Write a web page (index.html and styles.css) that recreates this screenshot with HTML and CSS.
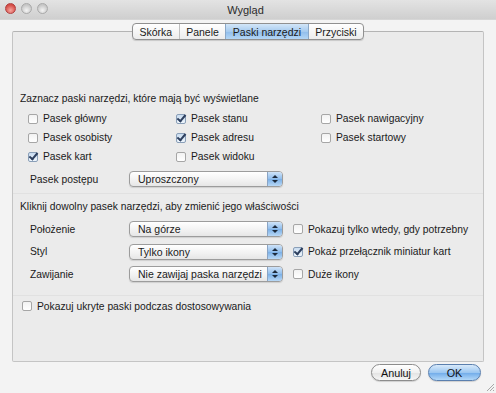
FILE: index.html
```html
<!DOCTYPE html>
<html lang="pl">
<head>
  <meta charset="UTF-8">
  <title>Wygląd</title>
  <link rel="stylesheet" href="styles.css">
</head>
<body>
  <div class="window">
    <header class="titlebar">
      <div class="lights">
        <span class="light red"></span>
        <span class="light"></span>
        <span class="light"></span>
      </div>
      <div class="title">Wygląd</div>
    </header>

    <div class="content">
      <div class="tabs">
        <div class="tab">Skórka</div>
        <div class="tab">Panele</div>
        <div class="tab active">Paski narzędzi</div>
        <div class="tab">Przyciski</div>
      </div>

      <div class="panel">
        <section class="group first">
          <div class="heading">Zaznacz paski narzędzi, które mają być wyświetlane</div>
          <div class="checks">
            <label class="check"><span class="box"></span>Pasek główny</label>
            <label class="check"><span class="box on"></span>Pasek stanu</label>
            <label class="check"><span class="box"></span>Pasek nawigacyjny</label>
            <label class="check"><span class="box"></span>Pasek osobisty</label>
            <label class="check"><span class="box on"></span>Pasek adresu</label>
            <label class="check"><span class="box"></span>Pasek startowy</label>
            <label class="check"><span class="box on"></span>Pasek kart</label>
            <label class="check"><span class="box"></span>Pasek widoku</label>
          </div>
          <div class="row">
            <span class="label">Pasek postępu</span>
            <div class="select"><span class="value">Uproszczony</span><span class="stepper"></span></div>
          </div>
        </section>

        <section class="group second">
          <div class="heading">Kliknij dowolny pasek narzędzi, aby zmienić jego właściwości</div>
          <div class="row">
            <span class="label">Położenie</span>
            <div class="select"><span class="value">Na górze</span><span class="stepper"></span></div>
            <label class="check"><span class="box"></span>Pokazuj tylko wtedy, gdy potrzebny</label>
          </div>
          <div class="row">
            <span class="label">Styl</span>
            <div class="select"><span class="value">Tylko ikony</span><span class="stepper"></span></div>
            <label class="check"><span class="box on"></span>Pokaż przełącznik miniatur kart</label>
          </div>
          <div class="row">
            <span class="label">Zawijanie</span>
            <div class="select"><span class="value">Nie zawijaj paska narzędzi</span><span class="stepper"></span></div>
            <label class="check"><span class="box"></span>Duże ikony</label>
          </div>
        </section>

        <section class="group third">
          <label class="check"><span class="box"></span>Pokazuj ukryte paski podczas dostosowywania</label>
        </section>
      </div>

      <div class="buttons">
        <button class="btn">Anuluj</button>
        <button class="btn default">OK</button>
      </div>
    </div>

    <svg class="grip" width="10" height="10" viewBox="0 0 10 10">
      <path d="M9 2 L2 9 M9 5 L5 9 M9 8 L8 9" stroke="#a8a8a8" stroke-width="1"/>
    </svg>
  </div>
</body>
</html>
```

FILE: styles.css
```css
body {
  margin: 0;
  font-family: 'Liberation Sans', Arial, sans-serif;
  font-size: 10.3px;
  color: #1a1a1a;
  background-color: #f3f3f3;
}

.window {
  width: 496px;
  height: 393px;
  display: flex;
  flex-direction: column;
  background: #f3f3f3;
  position: relative;
  overflow: hidden;
}

.titlebar {
  height: 19px;
  display: flex;
  align-items: center;
  background: linear-gradient(#e3e3e3, #cfcfcf);
  border-bottom: 1px solid #d6d6d6;
  position: relative;
}

.lights {
  display: flex;
  gap: 5px;
  padding-left: 5px;
  margin-top: -2px;
}

.light {
  width: 11px;
  height: 11px;
  border-radius: 50%;
  box-sizing: border-box;
  border: 1px solid #a9a9a9;
  background: radial-gradient(circle at 50% 70%, #f4f4f4, #c6c6c6 70%);
}

.light.red {
  border-color: #b04040;
  background: radial-gradient(circle at 50% 70%, #f7a6a0, #d44c45 70%);
}

.title {
  flex: 1;
  text-align: center;
  font-size: 11px;
  color: #2a2a2a;
  margin-left: -53px;
  margin-top: 1px;
}

.content {
  flex: 1;
  display: flex;
  flex-direction: column;
  padding: 3px 12px 0 12px;
}

/* segmented tabs */
.tabs {
  align-self: center;
  display: flex;
  height: 17px;
  margin-bottom: -9px;
  border: 1px solid #909090;
  border-radius: 4px;
  background: linear-gradient(#ffffff, #ececec);
  box-shadow: 0 1px 1px rgba(0, 0, 0, 0.15);
  overflow: hidden;
  position: relative;
  z-index: 1;
  box-sizing: border-box;
}

.tab {
  display: flex;
  align-items: center;
  padding: 0 6.5px;
  font-size: 10.5px;
  border-left: 1px solid #c0c0c0;
}

.tab:first-child {
  border-left: none;
}

.tab.active {
  background: linear-gradient(#d3e6f8, #a6cbef 50%, #8fbdec 51%, #b4d6f5);
  border-left-color: #8aa8c8;
}

.tab.active + .tab {
  border-left-color: #8aa8c8;
}

.panel {
  height: 331px;
  box-sizing: border-box;
  border: 1px solid #c4c4c4;
  border-top-color: #b4b4b4;
  background: #ebebeb;
  border-radius: 2px;
  padding: 57px 0 0 0;
}

.group {
  padding: 0 0 0 7px;
}

.heading {
  height: 20px;
  line-height: 20px;
}

.checks {
  display: grid;
  grid-template-columns: 148px 145px auto;
  grid-auto-rows: 19px;
  padding-left: 8px;
}

.check {
  display: flex;
  align-items: center;
  white-space: nowrap;
}

.box {
  width: 10px;
  height: 10px;
  box-sizing: border-box;
  border: 1px solid #a6a6a6;
  border-radius: 2px;
  background: linear-gradient(#f2f2f2, #ffffff);
  margin-right: 5px;
  flex: none;
  position: relative;
}

.box.on {
  border-color: #8a9fb8;
  background: linear-gradient(#c9dcf0, #eef5fc);
}

.box.on::after {
  content: "";
  position: absolute;
  left: 2px;
  top: -2px;
  width: 3px;
  height: 7px;
  border: solid #2d3f5e;
  border-width: 0 2px 2px 0;
  transform: rotate(40deg);
}

.row {
  display: flex;
  align-items: center;
  height: 22px;
}

.first .row {
  margin-top: 2px;
}

.label {
  width: 99px;
  padding-left: 10px;
  flex: none;
}

.select {
  width: 154px;
  height: 16px;
  box-sizing: border-box;
  border: 1px solid #9c9c9c;
  border-radius: 4px;
  background: linear-gradient(#ffffff, #f1f1f1 60%, #e6e6e6);
  box-shadow: 0 1px 1px rgba(0, 0, 0, 0.12);
  display: flex;
  align-items: center;
  overflow: hidden;
  flex: none;
}

.value {
  flex: 1;
  padding-left: 8px;
  font-size: 10.5px;
  white-space: nowrap;
}

.stepper {
  width: 14px;
  height: 100%;
  border-left: 1px solid #8aa4c4;
  background: linear-gradient(#cfe3f8, #8fbdec 50%, #7aafe6 51%, #b8d8f6);
  position: relative;
}

.stepper::before,
.stepper::after {
  content: "";
  position: absolute;
  left: 4px;
  border-left: 3px solid transparent;
  border-right: 3px solid transparent;
}

.stepper::before {
  top: 3px;
  border-bottom: 3px solid #1c2a3c;
}

.stepper::after {
  bottom: 3px;
  border-top: 3px solid #1c2a3c;
}

.row .check {
  margin-left: 10px;
}

.group.first {
  padding-bottom: 3px;
  border-bottom: 1px solid #e1e1e1;
}

.group.second {
  padding-top: 3px;
  padding-bottom: 9px;
  border-bottom: 1px solid #e1e1e1;
}

.group.second .heading {
  margin-bottom: 1px;
}

.group.second .row {
  height: 22.5px;
}

.group.third {
  padding: 5px 0 0 9px;
  height: 19px;
}

.buttons {
  display: flex;
  justify-content: flex-end;
  gap: 7px;
  padding: 2px 3px 0 0;
}

.btn {
  font-family: 'Liberation Sans', Arial, sans-serif;
  font-size: 10.8px;
  color: #111;
  height: 17px;
  border-radius: 9px;
  border: 1px solid #8c8c8c;
  background: linear-gradient(#ffffff, #f0f0f0 50%, #e2e2e2 51%, #f6f6f6);
  box-shadow: 0 1px 1px rgba(0, 0, 0, 0.15);
  padding: 0;
  width: 50px;
}

.btn.default {
  width: 53px;
  border-color: #5a7fae;
  background: linear-gradient(#d8e9fa, #9cc7f1 50%, #6eaae9 51%, #b3d8f8);
}

.grip {
  position: absolute;
  right: 1px;
  bottom: 1px;
}
```
